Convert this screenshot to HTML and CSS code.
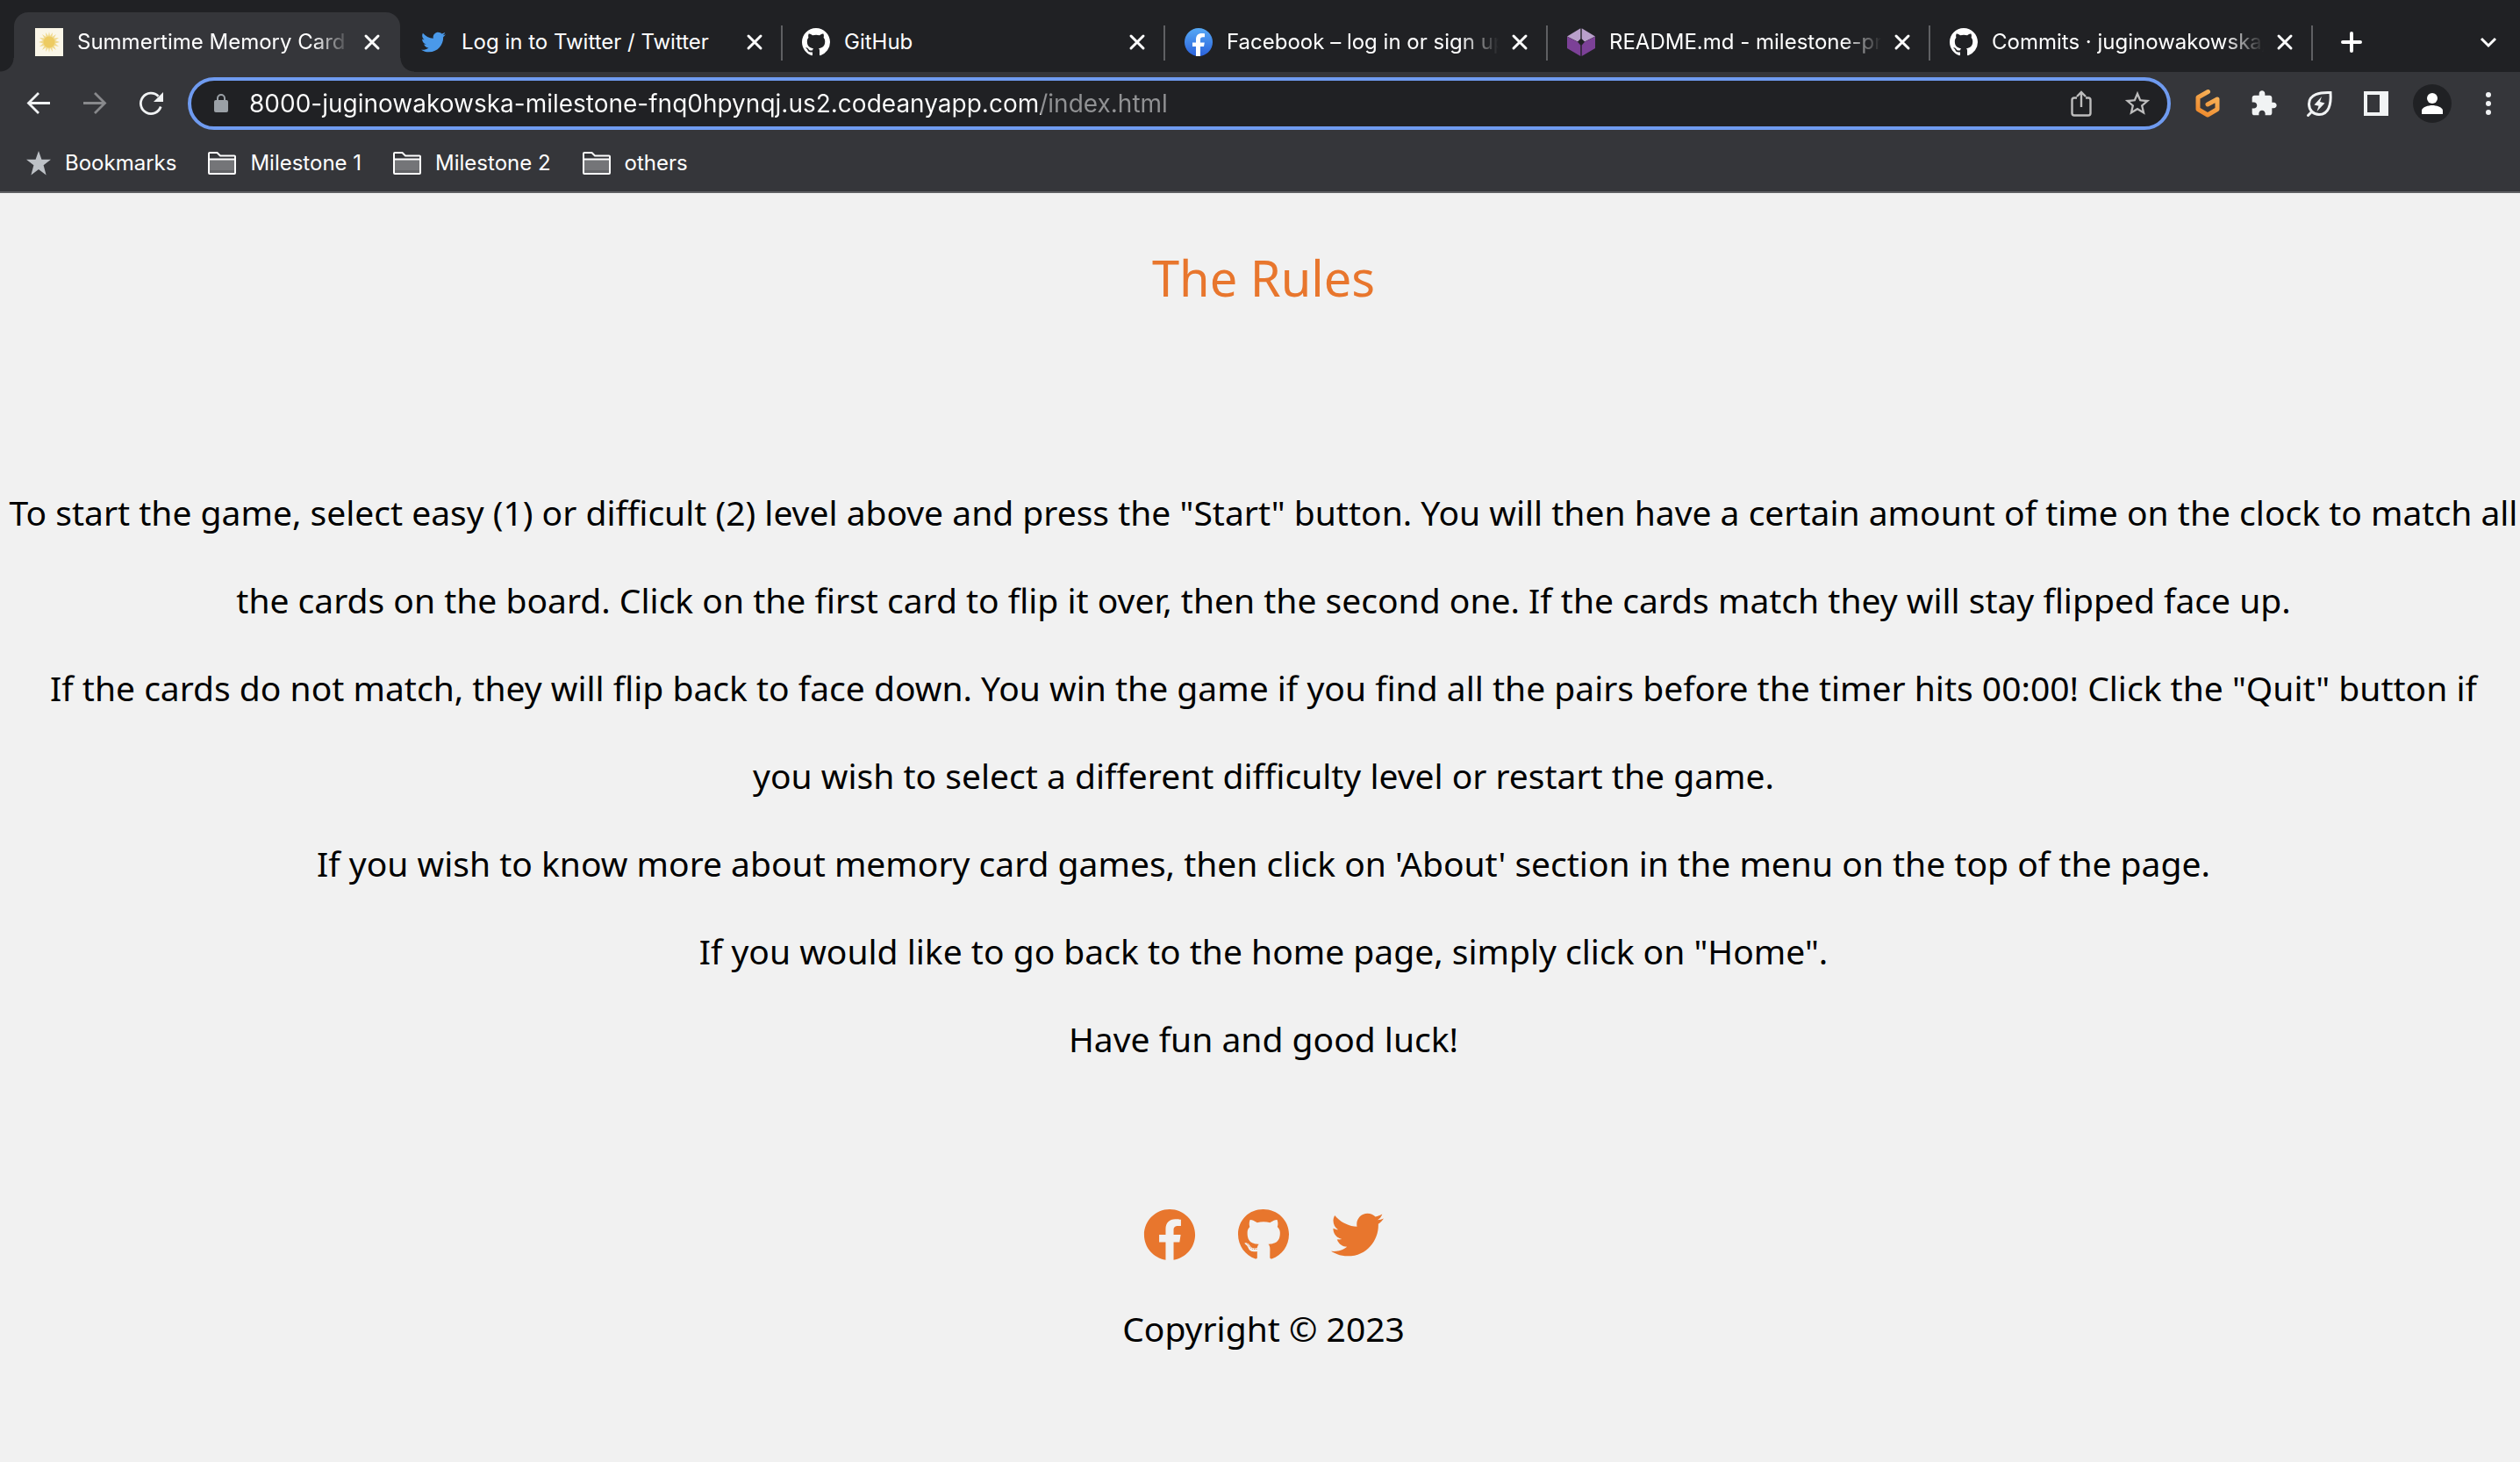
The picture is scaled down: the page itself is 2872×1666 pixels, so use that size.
FILE: index.html
```
<!DOCTYPE html>
<html lang="en">
<head>
<meta charset="utf-8">
<meta name="viewport" content="width=device-width, initial-scale=1">
<title>Summertime Memory Card</title>
<link rel="stylesheet" href="styles.css">
</head>
<body>
<svg class="defs" aria-hidden="true">
  <defs>
    <linearGradient id="fb-blue" x1="0" y1="0" x2="0" y2="1"><stop offset="0" stop-color="#56a9f5"/><stop offset="1" stop-color="#2b62dc"/></linearGradient>
    <linearGradient id="pod" x1="0.8" y1="0" x2="0.2" y2="1"><stop offset="0" stop-color="#f7b45c"/><stop offset="1" stop-color="#ee8b2e"/></linearGradient>
    <symbol id="i-close" viewBox="0 0 20 20"><path d="M3 3l14 14M17 3L3 17" fill="none" stroke="currentColor" stroke-width="3" stroke-linecap="round"/></symbol>
    <symbol id="i-folder" viewBox="0 0 32 26"><path d="M1 8V2a1 1 0 0 1 1-1h8.500l3.500 3.500H30a1 1 0 0 1 1 1V24a1 1 0 0 1-1 1H2a1 1 0 0 1-1-1z" fill="#35363a"/><path d="M2 9h28v15H2z" fill="#747578"/><path d="M2 21h28v3H2z" fill="#626366"/><path d="M1 8V2a1 1 0 0 1 1-1h8.500l3.500 3.500H30a1 1 0 0 1 1 1V24a1 1 0 0 1-1 1H2a1 1 0 0 1-1-1V8.500h30" fill="none" stroke="#fff" stroke-width="2"/></symbol>
    <symbol id="i-github" viewBox="0 0 16 16"><path fill="currentColor" d="M8 0C3.580 0 0 3.580 0 8c0 3.540 2.290 6.530 5.470 7.590.4.070.55-.17.55-.38 0-.19-.01-.82-.01-1.490-2.010.37-2.530-.49-2.690-.94-.09-.23-.48-.94-.82-1.130-.28-.15-.68-.52-.01-.53.63-.01 1.080.58 1.230.82.72 1.210 1.870.87 2.330.66.07-.52.28-.87.51-1.070-1.780-.2-3.640-.89-3.640-3.950 0-.87.31-1.590.82-2.150-.08-.2-.36-1.020.08-2.120 0 0 .67-.21 2.200.82.64-.18 1.320-.27 2-.27s1.360.09 2 .27c1.530-1.040 2.200-.82 2.200-.82.44 1.100.16 1.920.08 2.120.51.56.82 1.270.82 2.150 0 3.070-1.870 3.750-3.650 3.950.29.25.54.73.54 1.480 0 1.070-.01 1.930-.01 2.200 0 .21.15.46.55.38A8.010 8.010 0 0 0 16 8c0-4.420-3.580-8-8-8z"/></symbol>
    <symbol id="i-twitter" viewBox="0 0 512 512"><path fill="currentColor" d="M459.37 151.716c.325 4.548.325 9.097.325 13.645 0 138.72-105.583 298.558-298.558 298.558-59.452 0-114.68-17.219-161.137-47.106 8.447.974 16.568 1.299 25.34 1.299 49.055 0 94.213-16.568 130.274-44.832-46.132-.975-84.792-31.188-98.112-72.772 6.498.974 12.995 1.624 19.818 1.624 9.421 0 18.843-1.3 27.614-3.573-48.081-9.747-84.143-51.98-84.143-102.985v-1.299c13.969 7.797 30.214 12.67 47.431 13.319-28.264-18.843-46.781-51.005-46.781-87.391 0-19.492 5.197-37.36 14.294-52.954 51.655 63.675 129.3 105.258 216.365 109.807-1.624-7.797-2.599-15.918-2.599-24.04 0-57.828 46.782-104.934 104.934-104.934 30.213 0 57.502 12.67 76.67 33.137 23.715-4.548 46.456-13.32 66.599-25.34-7.798 24.366-24.366 44.833-46.132 57.827 21.117-2.273 41.584-8.122 60.426-16.243-14.292 20.791-32.161 39.308-52.628 54.253z"/></symbol>
  </defs>
</svg>

<header class="browser">
  <nav class="tabs" aria-label="Tabs">
    <div class="tab tab-active">
      <svg class="favicon" viewBox="0 0 32 32" aria-hidden="true"><path fill="#faf6e8" d="M0 0h32v32H0z"/><path fill="#f0d98e" d="M16 4l1 5 3-4-.5 5L24 7l-2.500 4.500L27 11l-4 3 5 2-5 1.500 4 3.500-5.500-1 2.500 5-4.500-3L20 27l-3-4.500-1 5.500-1-5.500-3 4.500.5-5L8 25l2.500-5L5 21l4-3.500L4 16l5-2-4-3 5.500.5L8 7l4.500 3L12 5l3 4z"/><circle cx="16" cy="16" r="6.500" fill="#edcb62"/></svg>
      <button class="tab-title fade">Summertime Memory Card</button>
      <button class="tab-close" aria-label="Close tab"><svg class="x"><use href="#i-close"/></svg></button>
    </div>
    <div class="tab">
      <svg class="favicon twitter-blue" aria-hidden="true" viewBox="0 0 32 32"><use href="#i-twitter" x="2" y="2" width="28" height="28"/></svg>
      <button class="tab-title">Log in to Twitter / Twitter</button>
      <button class="tab-close" aria-label="Close tab"><svg class="x"><use href="#i-close"/></svg></button>
    </div>
    <div class="tab">
      <svg class="favicon" aria-hidden="true"><use href="#i-github"/></svg>
      <button class="tab-title">GitHub</button>
      <button class="tab-close" aria-label="Close tab"><svg class="x"><use href="#i-close"/></svg></button>
    </div>
    <div class="tab">
      <svg class="favicon" viewBox="0 0 32 32" aria-hidden="true"><circle cx="16" cy="16" r="16" fill="url(#fb-blue)"/><path fill="#fff" d="M13 32V21H9v-4.500h4V13c0-4.500 2.500-7 6.500-7 1.300 0 2.500.1 3.500.3v4h-2c-2.200 0-3 1-3 2.700v3.500h4.800L22 21h-4v11z"/></svg>
      <button class="tab-title fade">Facebook – log in or sign up</button>
      <button class="tab-close" aria-label="Close tab"><svg class="x"><use href="#i-close"/></svg></button>
    </div>
    <div class="tab">
      <svg class="favicon" viewBox="0 0 32 32" aria-hidden="true"><path fill="#b9a0cb" d="M15.300.3v12L12 15.500 0 9.500zM16.700.3v12l3.300 3.200 12-6z"/><path fill="#7c4197" d="M0 9.800l12 6 3.300 3.700V32L0 23zM32 9.800l-12 6-3.300 3.700V32L32 23z"/></svg>
      <button class="tab-title fade">README.md - milestone-pr</button>
      <button class="tab-close" aria-label="Close tab"><svg class="x"><use href="#i-close"/></svg></button>
    </div>
    <div class="tab">
      <svg class="favicon" aria-hidden="true"><use href="#i-github"/></svg>
      <button class="tab-title fade">Commits · juginowakowska/</button>
      <button class="tab-close" aria-label="Close tab"><svg class="x"><use href="#i-close"/></svg></button>
    </div>
    <button class="cell new-tab" aria-label="New tab"><svg class="ico24" viewBox="0 0 24 24"><path d="M12 2v20M2 12h20" stroke="currentColor" stroke-width="4" stroke-linecap="round"/></svg></button>
    <button class="cell tab-search" aria-label="Search tabs"><svg class="ico24" viewBox="0 0 24 24"><path d="M4 8l8 8 8-8" fill="none" stroke="currentColor" stroke-width="3"/></svg></button>
  </nav>

  <div class="toolbar">
    <button class="cell" aria-label="Back"><svg class="ico40" viewBox="0 0 40 40"><path d="M33 19.500H9M20 8L8.500 19.500 20 31" fill="none" stroke="#f1f3f4" stroke-width="2.800"/></svg></button>
    <button class="cell" aria-label="Forward"><svg class="ico40" viewBox="0 0 40 40"><path d="M7 19.500h24M20 8l11.500 11.500L20 31" fill="none" stroke="#88898c" stroke-width="2.800"/></svg></button>
    <button class="cell" aria-label="Reload"><svg class="ico40" viewBox="0 0 40 40"><path d="M31.200 23.500A11.700 11.700 0 1 1 28.500 11.700" fill="none" stroke="#f1f3f4" stroke-width="2.800"/><path d="M34 7v11H23z" fill="#f1f3f4"/></svg></button>
    <div class="omnibox">
      <svg class="lock" viewBox="0 0 16 22" aria-hidden="true"><rect y="7" width="16" height="14" rx="2" fill="#9aa0a6"/><path d="M4 8V5a4 4 0 0 1 8 0v3" fill="none" stroke="#9aa0a6" stroke-width="2"/></svg>
      <input class="url" type="text" aria-label="Address" spellcheck="false" value="8000-juginowakowska-milestone-fnq0hpynqj.us2.codeanyapp.com/index.html">
      <button class="cell" aria-label="Share"><svg class="ico40" viewBox="0 0 40 40"><path d="M15 13.500h-3a2.500 2.500 0 0 0-2.500 2.500v15a2.500 2.500 0 0 0 2.500 2.500h16a2.500 2.500 0 0 0 2.500-2.500V16a2.500 2.500 0 0 0-2.500-2.500h-3M20 24V7.500M15 12l5-5 5 5" fill="none" stroke="#bdbdbd" stroke-width="2.400"/></svg></button>
      <button class="cell" aria-label="Bookmark this page"><svg class="ico34" viewBox="0 0 24 24"><path fill="#bdbdbd" d="M22 9.240l-7.190-.62L12 2 9.190 8.630 2 9.240l5.460 4.730L5.820 21 12 17.270 18.180 21l-1.630-7.030L22 9.240zM12 15.400l-3.760 2.270 1-4.280-3.320-2.880 4.380-.38L12 6.100l1.710 4.040 4.380.38-3.320 2.880 1 4.280L12 15.400z"/></svg></button>
    </div>
    <button class="cell" aria-label="Gitpod"><svg class="ico34" viewBox="0 0 34 34"><path d="M17.500 3.500L6 10v13.500L17 30l11-6.500V12L17 18" fill="none" stroke="url(#pod)" stroke-width="5" stroke-linecap="round" stroke-linejoin="round"/></svg></button>
    <button class="cell" aria-label="Extensions"><svg class="ico32" viewBox="0 0 24 24"><path fill="#f1f3f4" d="M20.500 11H19V7c0-1.100-.9-2-2-2h-4V3.500C13 2.120 11.880 1 10.500 1S8 2.120 8 3.500V5H4c-1.100 0-1.990.9-1.990 2v3.800H3.500c1.490 0 2.700 1.210 2.700 2.700s-1.210 2.700-2.700 2.700H2V20c0 1.100.9 2 2 2h3.800v-1.500c0-1.490 1.210-2.700 2.700-2.700 1.490 0 2.700 1.210 2.700 2.700V22H17c1.100 0 2-.9 2-2v-4h1.500c1.380 0 2.500-1.120 2.500-2.500S21.880 11 20.500 11z"/></svg></button>
    <button class="cell" aria-label="Energy saver"><svg class="ico34" viewBox="0 0 34 34"><path d="M29 4.500C17 4 4.500 6.500 4.500 17.500c0 7 5 12 11.500 12C27 29.500 30 18 29 4.500zM8 26l-4.500 4.500" fill="none" stroke="#f1f3f4" stroke-width="3" stroke-linecap="round"/><path d="M19 9l-8.500 9.500 5 1.200-2 6.300 9-9.500-5.500-1.500z" fill="#f1f3f4"/></svg></button>
    <button class="cell" aria-label="Side panel"><svg class="ico28" viewBox="0 0 28 28"><path fill="#f1f3f4" fill-rule="evenodd" d="M0 0h28v28H0zM4 4v20h14V4z"/></svg></button>
    <button class="cell" aria-label="Profile"><svg class="ico44" viewBox="0 0 44 44"><circle cx="22" cy="22" r="22" fill="#202124"/><circle cx="22" cy="16" r="6" fill="#fff"/><path d="M10 34v-4c0-4 8-6 12-6s12 2 12 6v4z" fill="#fff"/></svg></button>
    <button class="cell" aria-label="Menu"><svg class="ico28" viewBox="0 0 28 28" fill="#f1f3f4"><circle cx="14" cy="4" r="3"/><circle cx="14" cy="14" r="3"/><circle cx="14" cy="24" r="3"/></svg></button>
  </div>

  <nav class="bookmarks" aria-label="Bookmarks bar">
    <button class="mark"><svg class="star" viewBox="0 0 26 26" aria-hidden="true"><path fill="#bdc1c6" d="M13 0l3.200 9H26l-7.800 6.200L21 25.500l-8-6-8 6 2.800-10.300L0 9h9.800z"/></svg>Bookmarks</button>
    <button class="mark"><svg class="folder" aria-hidden="true"><use href="#i-folder"/></svg>Milestone 1</button>
    <button class="mark"><svg class="folder" aria-hidden="true"><use href="#i-folder"/></svg>Milestone 2</button>
    <button class="mark"><svg class="folder" aria-hidden="true"><use href="#i-folder"/></svg>others</button>
  </nav>
</header>

<main class="page">
  <h1>The Rules</h1>
  <div class="rules">
    <p>To start the game, select easy (1) or difficult (2) level above and press the "Start" button. You will then have a certain amount of time on the clock to match all<br>the cards on the board. Click on the first card to flip it over, then the second one. If the cards match they will stay flipped face up.</p>
    <p>If the cards do not match, they will flip back to face down. You win the game if you find all the pairs before the timer hits 00:00! Click the "Quit" button if<br>you wish to select a different difficulty level or restart the game.</p>
    <p>If you wish to know more about memory card games, then click on 'About' section in the menu on the top of the page.</p>
    <p>If you would like to go back to the home page, simply click on "Home".</p>
    <p>Have fun and good luck!</p>
  </div>
  <footer>
    <div class="social">
      <a href="#facebook" aria-label="Facebook"><svg class="s60" viewBox="0 0 512 512"><path fill="currentColor" d="M504 256C504 119 393 8 256 8S8 119 8 256c0 123.780 90.690 226.380 209.250 245V327.690h-63V256h63v-54.640c0-62.150 37-96.480 93.670-96.480 27.140 0 55.520 4.840 55.520 4.840v61h-31.280c-30.800 0-40.410 19.120-40.410 38.730V256h68.780l-11 71.690h-57.780V501C413.310 482.380 504 379.780 504 256z"/></svg></a>
      <a href="#github" aria-label="GitHub"><svg class="s58" viewBox="0 0 496 512"><path fill="currentColor" d="M165.9 397.4c0 2-2.3 3.6-5.2 3.6-3.3.3-5.6-1.3-5.6-3.6 0-2 2.3-3.6 5.2-3.6 3-.3 5.6 1.3 5.6 3.6zm-31.1-4.5c-.7 2 1.3 4.3 4.3 4.900 2.600 1 5.600 0 6.200-2s-1.300-4.300-4.300-5.200c-2.600-.7-5.500.3-6.200 2.300zm44.200-1.700c-2.900.7-4.900 2.600-4.600 4.900.3 2 2.900 3.300 5.900 2.600 2.900-.7 4.900-2.600 4.600-4.600-.3-1.900-3-3.200-5.900-2.900zM244.800 8C106.100 8 0 113.300 0 252c0 110.900 69.800 205.800 169.500 239.200 12.800 2.300 17.300-5.600 17.300-12.100 0-6.200-.3-40.400-.3-61.400 0 0-70 15-84.700-29.800 0 0-11.400-29.100-27.800-36.600 0 0-22.900-15.700 1.600-15.400 0 0 24.900 2 38.600 25.800 21.900 38.600 58.600 27.500 72.900 20.900 2.300-16 8.800-27.100 16-33.700-55.900-6.200-112.300-14.300-112.300-110.500 0-27.500 7.600-41.300 23.600-58.900-2.600-6.500-11.100-33.300 2.600-67.900 20.900-6.500 69 27 69 27 20-5.600 41.500-8.500 62.800-8.500s42.800 2.900 62.800 8.500c0 0 48.100-33.600 69-27 13.700 34.700 5.200 61.400 2.600 67.900 16 17.700 25.800 31.500 25.800 58.900 0 96.500-58.900 104.200-114.800 110.500 9.200 7.900 17 22.900 17 46.400 0 33.700-.3 75.400-.3 83.600 0 6.500 4.600 14.400 17.300 12.100C428.200 457.800 496 362.900 496 252 496 113.300 383.500 8 244.800 8zM97.200 352.900c-1.300 1-1 3.300.7 5.200 1.600 1.600 3.900 2.300 5.200 1 1.300-1 1-3.300-.7-5.200-1.600-1.600-3.900-2.300-5.200-1zm-10.800-8.100c-.7 1.300.3 2.900 2.300 3.900 1.600 1 3.600.7 4.300-.7.7-1.300-.3-2.900-2.300-3.900-2-.6-3.600-.3-4.300.7zm32.400 35.600c-1.600 1.300-1 4.300 1.300 6.200 2.300 2.300 5.200 2.600 6.500 1 1.300-1.300.7-4.300-1.300-6.200-2.200-2.300-5.200-2.600-6.500-1zm-11.400-14.700c-1.600 1-1.600 3.600 0 5.900 1.600 2.300 4.300 3.300 5.600 2.300 1.600-1.300 1.600-3.900 0-6.200-1.400-2.300-4-3.300-5.600-2z"/></svg></a>
      <a href="#twitter" aria-label="Twitter"><svg class="s60"><use href="#i-twitter"/></svg></a>
    </div>
    <p>Copyright © 2023</p>
  </footer>
</main>
</body>
</html>
```
FILE: styles.css
```
* { box-sizing: border-box; }

body {
  margin: 0;
  background: #f1f1f1;
  color: #000;
  font-family: "Noto Sans", sans-serif;
}

button {
  border: 0;
  padding: 0;
  background: none;
  color: inherit;
  font: inherit;
}

svg { display: block; flex: none; }
.defs { position: absolute; width: 0; height: 0; }

/* Browser frame */
.browser {
  background: #35363a;
  border-bottom: 2px solid #5f6063;
  color: #fff;
  font: 24px/32px Inter, sans-serif;
}

.tabs {
  display: flex;
  align-items: stretch;
  padding: 14px 4px 0 16px;
  background: #202124;
}

.tab {
  position: relative;
  display: flex;
  flex: 0 1 436px;
  align-items: center;
  min-width: 0;
  height: 68px;
  padding: 0 8px 0 22px;
}

.tab::after {
  content: "";
  position: absolute;
  top: 15px;
  right: 0;
  width: 2px;
  height: 40px;
  background: #5f6063;
}

.tab-active {
  flex-basis: 440px;
  padding-left: 24px;
  border-radius: 16px 16px 0 0;
  background: #35363a;
}

/* Curved feet where the active tab meets the toolbar */
.tab-active::before,
.tab-active::after {
  content: "";
  position: absolute;
  top: auto;
  bottom: 0;
  width: 16px;
  height: 16px;
}
.tab-active::before { left: -16px; background: radial-gradient(circle at 0 0, #202124 15px, #35363a 16px); }
.tab-active::after { right: -16px; background: radial-gradient(circle at 100% 0, #202124 15px, #35363a 16px); }

.favicon { width: 32px; height: 32px; margin-right: 16px; }
.twitter-blue { color: #4a99e9; }

.tab-title {
  flex: 1;
  min-width: 0;
  overflow: hidden;
  text-align: left;
  white-space: nowrap;
}
.fade {
  -webkit-mask-image: linear-gradient(to left, transparent, #000 44px);
  mask-image: linear-gradient(to left, transparent, #000 44px);
}

.tab-close { display: grid; place-items: center; width: 48px; height: 48px; }
.x { width: 20px; height: 20px; }

.cell { display: grid; flex: none; place-items: center; width: 64px; }
.new-tab { margin-left: 12px; }
.tab-search { margin-left: auto; }

.ico24 { width: 24px; height: 24px; }
.ico28 { width: 28px; height: 28px; }
.ico32 { width: 32px; height: 32px; }
.ico34 { width: 34px; height: 34px; }
.ico40 { width: 40px; height: 40px; }
.ico44 { width: 44px; height: 44px; }

.toolbar {
  display: flex;
  padding: 6px 4px 0 12px;
}

.omnibox {
  display: flex;
  flex: 1;
  align-items: center;
  min-width: 0;
  height: 60px;
  margin: 0 10px;
  padding: 0 2px 0 26px;
  border: 4px solid #6f9bf0;
  border-radius: 30px;
  background: #202124;
}
.lock { width: 16px; height: 22px; margin-right: 24px; }

/* The host is white, the path after it grey */
.url {
  flex: 1;
  min-width: 0;
  height: 40px;
  padding: 0;
  border: 0;
  outline: 0;
  background: linear-gradient(to right, #fff 902px, #919294 902px);
  -webkit-background-clip: text;
  background-clip: text;
  color: transparent;
  font: 28px/40px Inter, sans-serif;
}

.bookmarks {
  display: flex;
  align-items: center;
  gap: 36px;
  height: 70px;
  padding: 6px 30px 0;
}
.mark { display: flex; align-items: center; gap: 16px; white-space: nowrap; }
.star { width: 28px; height: 28px; }
.folder { width: 32px; height: 26px; }

/* Page */
.page {
  padding: 46px 0 86px 8px;
  text-align: center;
  font-size: 39px;
  line-height: 100px;
}

h1 {
  margin: 0 0 168px;
  color: #e8762d;
  font-size: 56px;
  font-weight: 400;
  line-height: 100px;
}

p { margin: 0; }

.social {
  display: flex;
  justify-content: center;
  gap: 48px;
  margin: 143px 0 27px;
  color: #e8762d;
}
.social a { color: inherit; }
.s58 { width: 58px; height: 60px; }
.s60 { width: 60px; height: 60px; }
```
